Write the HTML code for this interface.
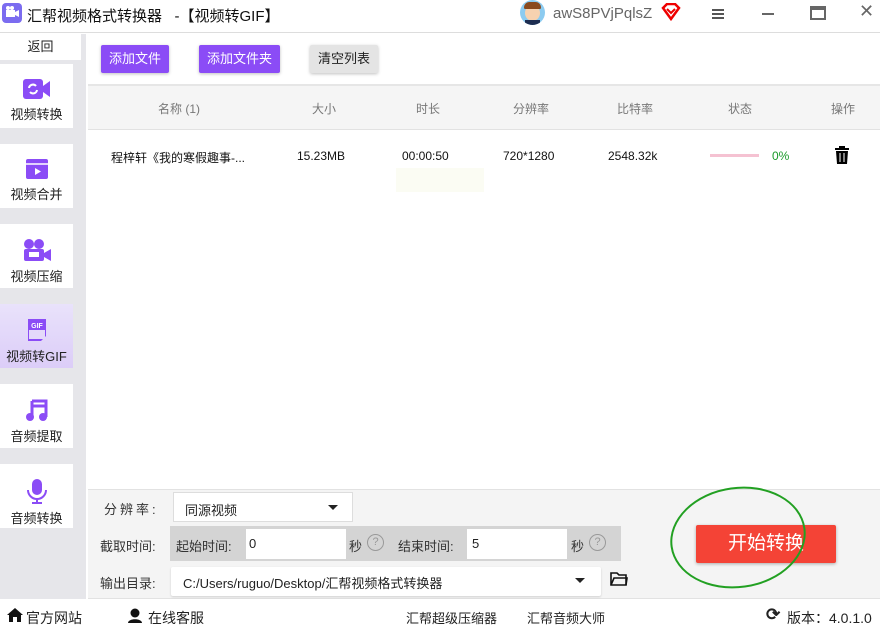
<!DOCTYPE html>
<html><head><meta charset="utf-8"><style>
*{margin:0;padding:0;box-sizing:border-box}
body{width:880px;height:639px;overflow:hidden;background:#fff;font-family:"Liberation Sans","Noto Sans CJK SC",sans-serif;position:relative;color:#222}
.a{position:absolute}
.sb{left:0;top:34px;width:86px;height:565px;background:#e6e6ea}
.it{position:absolute;left:0;width:73px;height:64px;background:#fff;text-align:center;font-size:13px;color:#222;line-height:16px}
.it svg{display:block;margin:14px auto 7px}
.btn{position:absolute;top:45px;height:28px;background:#8b4cf6;color:#fff;font-size:13px;line-height:28px;text-align:center;border-radius:2px;box-shadow:0 1px 3px rgba(0,0,0,.25)}
.th{font-size:12px;color:#777;top:100px}
.td{font-size:12px;color:#111;top:149px}
.lbl{font-size:13px;color:#333}
</style></head><body>
<div class="a" style="left:0;top:0;width:880px;height:33px;border-bottom:1px solid #ddd"></div>
<svg class="a" style="left:2px;top:3px" width="20" height="20" viewBox="0 0 20 20"><rect width="20" height="20" rx="4" fill="#7b6cf0"/><rect x="4" y="7" width="9" height="7" fill="#fff"/><path d="M13 9l4-2v7l-4-2z" fill="#fff"/><circle cx="6" cy="5" r="2" fill="#fff"/><circle cx="10" cy="5" r="2" fill="#fff"/></svg>
<div class="a" style="left:27px;top:5px;font-size:15px;color:#111">汇帮视频格式转换器 &nbsp;&nbsp;-【视频转GIF】</div>
<div class="a" style="left:520px;top:0;width:25px;height:25px;border-radius:50%;background:#8ccbf0;overflow:hidden"><div style="position:absolute;left:5px;top:5px;width:15px;height:16px;border-radius:50%;background:#f7d2b0"></div><div style="position:absolute;left:4px;top:2px;width:17px;height:7px;border-radius:8px 8px 2px 2px;background:#8a4a1e"></div><div style="position:absolute;left:5px;top:20px;width:15px;height:6px;background:#1d2d50"></div></div>
<div class="a" style="left:553px;top:5px;font-size:15px;color:#666">awS8PVjPqlsZ</div>
<svg class="a" style="left:661px;top:3px" width="20" height="18" viewBox="0 0 20 18"><path d="M2 5l4-4h8l4 4-8 11z" fill="none" stroke="#e00" stroke-width="2.5"/><path d="M6 6l4 4 4-4" fill="none" stroke="#e00" stroke-width="2"/></svg>
<div class="a" style="left:712px;top:9px;width:12px;height:2px;background:#555;box-shadow:0 4px 0 #555,0 8px 0 #555"></div>
<div class="a" style="left:762px;top:13px;width:12px;height:2px;background:#666"></div>
<div class="a" style="left:810px;top:6px;width:16px;height:14px;border:2px solid #666;border-top-width:4px"></div>
<div class="a" style="left:859px;top:1px;font-size:18px;color:#666">✕</div>
<div class="a sb"></div>
<div class="a" style="left:0;top:34px;width:81px;height:26px;background:#fff;text-align:center;font-size:13px;line-height:26px">返回</div>
<div class="it" style="top:64px"><svg width="28" height="22" viewBox="0 0 28 22"><rect x="0" y="1" width="20" height="20" rx="3" fill="#8b4cf6"/><path d="M20 8l7-5v16l-7-5z" fill="#8b4cf6"/><path d="M6 10a4 4 0 0 1 7-2M14 12a4 4 0 0 1-7 2" stroke="#fff" stroke-width="2" fill="none"/></svg>视频转换</div>
<div class="it" style="top:144px"><svg width="24" height="22" viewBox="0 0 24 22"><rect x="1" y="1" width="22" height="20" rx="2" fill="#8b4cf6"/><path d="M1 6h22" stroke="#fff" stroke-width="1.5"/><path d="M10 10v7l6-3.5z" fill="#fff"/></svg>视频合并</div>
<div class="it" style="top:224px"><svg width="30" height="24" viewBox="0 0 30 24"><circle cx="7" cy="6" r="5" fill="#8b4cf6"/><circle cx="17" cy="6" r="5" fill="#8b4cf6"/><rect x="2" y="11" width="20" height="12" rx="2" fill="#8b4cf6"/><path d="M22 15l7-4v12l-7-4z" fill="#8b4cf6"/><rect x="7" y="14" width="10" height="5" fill="#fff"/></svg>视频压缩</div>
<div class="it" style="top:304px;background:linear-gradient(#e9e2fb,#dccdf8)"><svg width="24" height="24" viewBox="0 0 24 24"><path d="M3 1h18v17l-5 5H3z" fill="#8b4cf6"/><rect x="4" y="12" width="16" height="9" fill="#e4d9fa"/><text x="12" y="10" font-size="7" font-weight="bold" fill="#fff" text-anchor="middle" font-family="Liberation Sans">GIF</text></svg>视频转GIF</div>
<div class="it" style="top:384px"><svg width="24" height="24" viewBox="0 0 24 24"><path d="M7 3h14v16" stroke="#8b4cf6" stroke-width="3" fill="none"/><path d="M7 3v16M7 8h14" stroke="#8b4cf6" stroke-width="3"/><circle cx="5" cy="19" r="4" fill="#8b4cf6"/><circle cx="18" cy="19" r="4" fill="#8b4cf6"/></svg>音频提取</div>
<div class="it" style="top:464px"><svg width="22" height="26" viewBox="0 0 22 26"><rect x="6" y="1" width="10" height="16" rx="5" fill="#8b4cf6"/><path d="M2 12a9 9 0 0 0 18 0M11 21v4M6 25h10" stroke="#8b4cf6" stroke-width="2" fill="none"/></svg>音频转换</div>
<div class="btn" style="left:101px;width:68px">添加文件</div>
<div class="btn" style="left:199px;width:81px">添加文件夹</div>
<div class="btn" style="left:310px;width:68px;background:#e4e4e4;color:#222">清空列表</div>
<div class="a" style="left:88px;top:84px;width:792px;height:46px;background:#f5f5f5;border-top:2px solid #e6e6e6;border-bottom:1px solid #e2e2e2"></div>
<div class="a th" style="left:158px">名称 (1)</div>
<div class="a th" style="left:312px">大小</div>
<div class="a th" style="left:416px">时长</div>
<div class="a th" style="left:513px">分辨率</div>
<div class="a th" style="left:617px">比特率</div>
<div class="a th" style="left:728px">状态</div>
<div class="a th" style="left:831px">操作</div>
<div class="a td" style="left:111px">程梓轩《我的寒假趣事-...</div>
<div class="a td" style="left:297px">15.23MB</div>
<div class="a td" style="left:402px">00:00:50</div>
<div class="a td" style="left:503px">720*1280</div>
<div class="a td" style="left:608px">2548.32k</div>
<div class="a" style="left:396px;top:168px;width:88px;height:24px;background:#fbfcf3"></div>
<div class="a" style="left:710px;top:154px;width:49px;height:3px;background:#f5c2d2"></div>
<div class="a td" style="left:772px;color:#1a9a2a">0%</div>
<svg class="a" style="left:834px;top:146px" width="16" height="18" viewBox="0 0 16 18"><rect x="1" y="2" width="14" height="2" fill="#000"/><rect x="5" y="0" width="6" height="3" fill="#000"/><path d="M2 5h12l-1 13H3z" fill="#000"/><path d="M6 7v9M10 7v9" stroke="#fff" stroke-width="1"/></svg>
<div class="a" style="left:88px;top:489px;width:792px;height:110px;background:#f4f4f4;border-top:1px solid #e2e2e2;border-bottom:1px solid #e2e2e2"></div>
<div class="a lbl" style="left:104px;top:499px;letter-spacing:3px">分辨率:</div>
<div class="a" style="left:173px;top:492px;width:180px;height:30px;background:#fff;border:1px solid #ddd;font-size:13px;padding:7px 11px">同源视频</div>
<div class="a" style="left:328px;top:505px;border:5px solid transparent;border-top:5px solid #222"></div>
<div class="a lbl" style="left:100px;top:536px">截取时间:</div>
<div class="a" style="left:170px;top:526px;width:451px;height:35px;background:#d4d4d4"></div>
<div class="a lbl" style="left:176px;top:536px">起始时间:</div>
<div class="a" style="left:246px;top:529px;width:100px;height:30px;background:#fff;font-size:13px;padding:7px 3px">0</div>
<div class="a lbl" style="left:349px;top:536px">秒</div>
<div class="a" style="left:367px;top:534px;width:17px;height:17px;border:1px solid #999;border-radius:50%;font-size:11px;color:#999;text-align:center;line-height:15px">?</div>
<div class="a lbl" style="left:398px;top:536px">结束时间:</div>
<div class="a" style="left:467px;top:529px;width:100px;height:30px;background:#fff;font-size:13px;padding:7px 5px">5</div>
<div class="a lbl" style="left:571px;top:536px">秒</div>
<div class="a" style="left:589px;top:534px;width:17px;height:17px;border:1px solid #999;border-radius:50%;font-size:11px;color:#999;text-align:center;line-height:15px">?</div>
<div class="a lbl" style="left:100px;top:573px">输出目录:</div>
<div class="a" style="left:171px;top:567px;width:430px;height:29px;background:#fff;border-radius:2px;box-shadow:0 1px 2px rgba(0,0,0,.15);font-size:13px;padding:6px 12px">C:/Users/ruguo/Desktop/汇帮视频格式转换器</div>
<div class="a" style="left:575px;top:578px;border:5px solid transparent;border-top:5px solid #222"></div>
<svg class="a" style="left:610px;top:571px" width="18" height="15" viewBox="0 0 18 15"><path d="M1 2h6l2 2h7v10H1z" fill="none" stroke="#111" stroke-width="1.6"/><path d="M1 14l3-7h13l-1 7" fill="none" stroke="#111" stroke-width="1.6"/></svg>
<div class="a" style="left:696px;top:525px;width:140px;height:38px;background:#f44336;border-radius:2px;box-shadow:0 1px 3px rgba(0,0,0,.3);color:#fff;font-size:19px;text-align:center;line-height:38px">开始转换</div>
<div class="a" style="left:670px;top:487px;width:136px;height:101px;border:2.5px solid #22a022;border-radius:50%;transform:rotate(-8deg)"></div>
<svg class="a" style="left:6px;top:607px" width="18" height="16" viewBox="0 0 18 16"><path d="M9 1L1 8h2v7h4v-5h4v5h4V8h2z" fill="#111"/></svg>
<div class="a" style="left:26px;top:608px;font-size:14px">官方网站</div>
<svg class="a" style="left:127px;top:607px" width="16" height="16" viewBox="0 0 16 16"><circle cx="8" cy="6" r="4.5" fill="#111"/><path d="M1 16c0-5 14-5 14 0z" fill="#111"/></svg>
<div class="a" style="left:148px;top:608px;font-size:14px">在线客服</div>
<div class="a" style="left:406px;top:608px;font-size:13px">汇帮超级压缩器</div>
<div class="a" style="left:527px;top:608px;font-size:13px">汇帮音频大师</div>
<div class="a" style="left:766px;top:605px;font-size:17px;font-weight:bold">⟳</div>
<div class="a" style="left:787px;top:608px;font-size:14px">版本：4.0.1.0</div>
</body></html>
